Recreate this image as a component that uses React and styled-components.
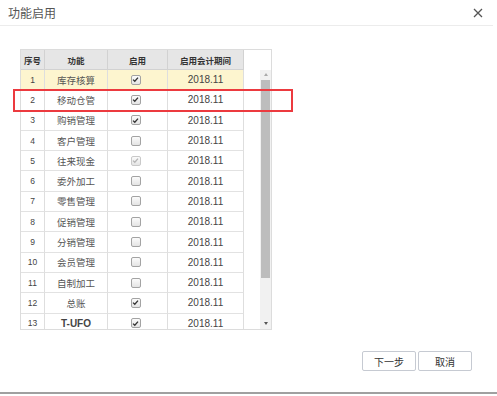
import React from 'react';
import styled, { createGlobalStyle } from 'styled-components';

const GlobalStyle = createGlobalStyle`
  html, body {
    margin: 0;
    padding: 0;
    background: #fff;
  }
  body {
    font-family: "Liberation Sans", "Noto Sans CJK SC", sans-serif;
    color: #333;
  }
`;

const rows = [
  { no: 1, name: '库存核算', on: true },
  { no: 2, name: '移动仓管', on: true },
  { no: 3, name: '购销管理', on: true },
  { no: 4, name: '客户管理', on: false },
  { no: 5, name: '往来现金', on: true, locked: true },
  { no: 6, name: '委外加工', on: false },
  { no: 7, name: '零售管理', on: false },
  { no: 8, name: '促销管理', on: false },
  { no: 9, name: '分销管理', on: false },
  { no: 10, name: '会员管理', on: false },
  { no: 11, name: '自制加工', on: false },
  { no: 12, name: '总账', on: true },
  { no: 13, name: 'T-UFO', on: true },
];

const COLS = '24px 63px 60px 76px';

const Dialog = styled.div`
  position: relative;
  width: 497px;
  height: 394px;
  box-sizing: border-box;
  display: flex;
  flex-direction: column;
  border-bottom: 2px solid #a0a0a0;
  overflow: hidden;
`;

const Header = styled.div`
  height: 26px;
  width: 493px;
  box-sizing: border-box;
  display: flex;
  align-items: center;
  justify-content: space-between;
  padding: 0 10px 0 8px;
  border-bottom: 1px solid #ececec;
`;

const Title = styled.div`
  font-family: "Noto Sans CJK SC", sans-serif;
  font-size: 12px;
  color: #555;
`;

const CloseButton = styled.button`
  border: none;
  background: transparent;
  padding: 0;
  width: 10px;
  height: 10px;
  display: flex;
  cursor: pointer;
`;

const Body = styled.div`
  padding: 23px 0 0 20px;
`;

const Grid = styled.div`
  width: 252px;
  height: 281px;
  box-sizing: border-box;
  border: 1px solid #dcdcdc;
  display: flex;
  flex-direction: column;
`;

const HeadRow = styled.div`
  display: grid;
  grid-template-columns: ${COLS};
  height: 20px;
  flex-shrink: 0;
`;

const HeadCell = styled.div`
  background: #e6e6e6;
  border-right: 1px solid #d2d2d2;
  border-bottom: 1px solid #d2d2d2;
  display: flex;
  align-items: center;
  justify-content: center;
  font-family: "Noto Sans CJK SC", sans-serif;
  font-weight: bold;
  font-size: 8.5px;
  color: #333;
`;

const ScrollArea = styled.div`
  flex: 1;
  display: flex;
  overflow: hidden;
`;

const Rows = styled.div`
  width: 223px;
`;

const Row = styled.div`
  display: grid;
  grid-template-columns: ${COLS};
  height: 20.3px;
  background: ${({ highlight }) => (highlight ? '#fdf5cf' : '#fff')};
`;

const Cell = styled.div`
  border-right: 1px solid #dedede;
  border-bottom: 1px solid #e2e2e2;
  display: flex;
  align-items: center;
  justify-content: center;
  font-family: ${({ cjk }) =>
    cjk ? '"Noto Sans CJK SC", sans-serif' : '"Liberation Sans", sans-serif'};
  font-size: ${({ small, cjk }) => (small ? '8.5px' : cjk ? '9.5px' : '10px')};
  font-weight: ${({ bold }) => (bold ? 'bold' : 'normal')};
  color: ${({ cjk }) => (cjk ? '#555' : '#444')};
`;

const Box = styled.span`
  width: 8px;
  height: 8px;
  border: 1px solid ${({ locked }) => (locked ? '#c9c9c9' : '#a3a3a3')};
  border-radius: 2px;
  background: linear-gradient(#fbfbfb, #e4e4e4);
  display: flex;
  align-items: center;
  justify-content: center;
  margin-left: -4px;
`;

const Gap = styled.div`
  width: 17px;
`;

const ScrollBar = styled.div`
  width: 11px;
  background: #f1f1f1;
  display: flex;
  flex-direction: column;
  align-items: center;
  padding: 3px 0 4px;
  box-sizing: border-box;
`;

const Arrow = styled.span`
  width: 0;
  height: 0;
  border-left: 2.5px solid transparent;
  border-right: 2.5px solid transparent;
  ${({ down }) =>
    down
      ? 'border-top: 3px solid #555;'
      : 'border-bottom: 3px solid #aaa;'}
`;

const Thumb = styled.div`
  width: 9px;
  height: 198px;
  background: #bdbdbd;
  margin: 4px 0 auto;
`;

const Footer = styled.div`
  display: flex;
  justify-content: flex-end;
  gap: 2px;
  padding: 21px 25px 0 0;
`;

const Button = styled.button`
  width: 54px;
  height: 20px;
  box-sizing: border-box;
  border: 1px solid #c6cad2;
  border-radius: 2px;
  background: #fff;
  font-family: "Noto Sans CJK SC", sans-serif;
  font-size: 10px;
  color: #333;
  padding: 0;
  cursor: pointer;
`;

const Marker = styled.div`
  position: absolute;
  left: 13px;
  top: 89px;
  width: 280px;
  height: 23px;
  box-sizing: border-box;
  border: 2px solid #ec3a3f;
  pointer-events: none;
`;

const Check = ({ on, locked }) => (
  <Box locked={locked}>
    {on && (
      <svg width="7" height="7" viewBox="0 0 7 7">
        <path
          d="M1 3.6 L2.8 5.3 L6 1.6"
          fill="none"
          stroke={locked ? '#b5b5b5' : '#333'}
          strokeWidth="1.3"
        />
      </svg>
    )}
  </Box>
);

const App = () => (
  <>
    <GlobalStyle />
    <Dialog>
      <Header>
        <Title>功能启用</Title>
        <CloseButton aria-label="close">
          <svg width="10" height="10" viewBox="0 0 10 10">
            <path d="M1 1 L9 9 M9 1 L1 9" stroke="#555" strokeWidth="1.3" />
          </svg>
        </CloseButton>
      </Header>
      <Body>
        <Grid>
          <HeadRow>
            <HeadCell>序号</HeadCell>
            <HeadCell>功能</HeadCell>
            <HeadCell>启用</HeadCell>
            <HeadCell>启用会计期间</HeadCell>
          </HeadRow>
          <ScrollArea>
            <Rows>
              {rows.map((r) => (
                <Row key={r.no} highlight={r.no === 1}>
                  <Cell small>{r.no}</Cell>
                  <Cell cjk={!/^[A-Z]/.test(r.name)} bold={r.name === 'T-UFO'}>
                    {r.name}
                  </Cell>
                  <Cell>
                    <Check on={r.on} locked={r.locked} />
                  </Cell>
                  <Cell>2018.11</Cell>
                </Row>
              ))}
            </Rows>
            <Gap />
            <ScrollBar>
              <Arrow />
              <Thumb />
              <Arrow down />
            </ScrollBar>
          </ScrollArea>
        </Grid>
      </Body>
      <Footer>
        <Button>下一步</Button>
        <Button>取消</Button>
      </Footer>
      <Marker />
    </Dialog>
  </>
);

export default App;
